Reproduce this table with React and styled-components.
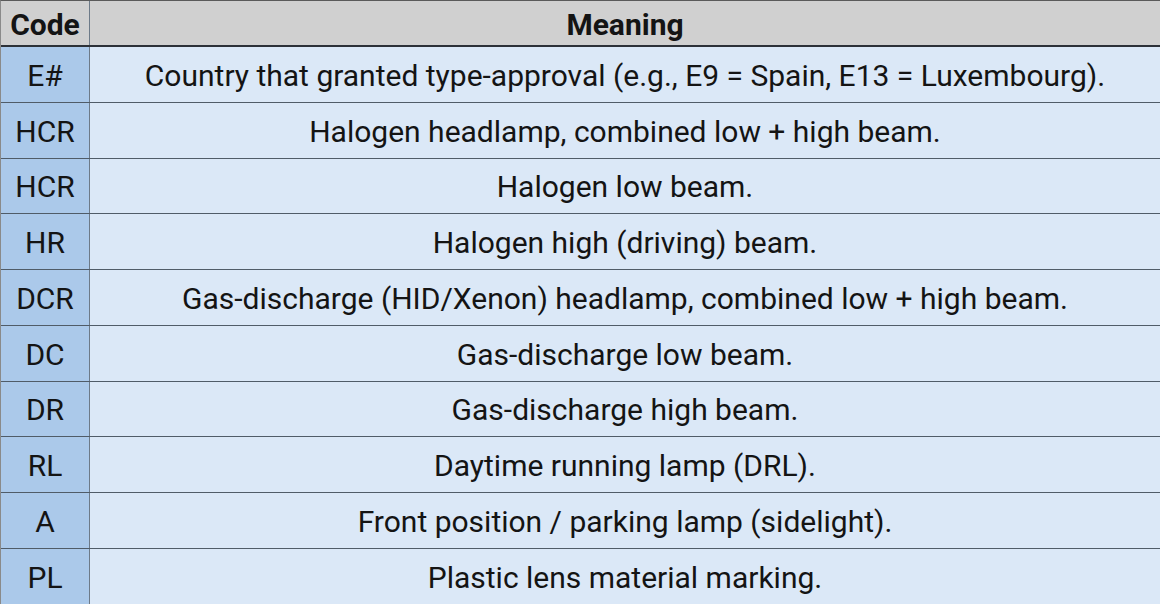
import styled, { createGlobalStyle } from "styled-components"

const GlobalStyle = createGlobalStyle`
  html, body {
    margin: 0;
    padding: 0;
    background: #dbe8f7;
  }
  * {
    box-sizing: border-box;
  }
`

const Table = styled.div`
  width: 1160px;
  height: 604px;
  overflow: hidden;
  font-family: Roboto, "Liberation Sans", sans-serif;
  color: #141414;
  border-top: 1px solid #5a5a5a;
  border-left: 1px solid #8a8a8a;
`

const HeadRow = styled.div`
  display: grid;
  grid-template-columns: 89px 1fr;
  height: 46px;
  background: #d0d0d0;
  border-bottom: 2px solid #2c3138;
`

const Row = styled.div`
  display: grid;
  grid-template-columns: 89px 1fr;
  height: 55.75px;
  border-bottom: 1px solid #505c68;
`

const Cell = styled.div`
  display: flex;
  align-items: center;
  justify-content: center;
  font-size: 30px;
  font-weight: ${p => (p.$head ? 700 : 400)};
  background: ${p => (p.$head ? "#d0d0d0" : p.$code ? "#abc9ea" : "#dbe8f7")};
  border-right: ${p => (p.$code ? "1px solid #6d7a88" : "none")};
  padding-top: 2px;
  white-space: nowrap;
`

const rows = [
  ["E#", "Country that granted type-approval (e.g., E9 = Spain, E13 = Luxembourg)."],
  ["HCR", "Halogen headlamp, combined low + high beam."],
  ["HCR", "Halogen low beam."],
  ["HR", "Halogen high (driving) beam."],
  ["DCR", "Gas-discharge (HID/Xenon) headlamp, combined low + high beam."],
  ["DC", "Gas-discharge low beam."],
  ["DR", "Gas-discharge high beam."],
  ["RL", "Daytime running lamp (DRL)."],
  ["A", "Front position / parking lamp (sidelight)."],
  ["PL", "Plastic lens material marking."],
]

export default function App() {
  return (
    <>
      <GlobalStyle />
      <Table>
        <HeadRow>
          <Cell $head $code>Code</Cell>
          <Cell $head>Meaning</Cell>
        </HeadRow>
        {rows.map(([code, meaning], i) => (
          <Row key={`row${i}`}>
            <Cell $code>{code}</Cell>
            <Cell>{meaning}</Cell>
          </Row>
        ))}
      </Table>
    </>
  )
}
